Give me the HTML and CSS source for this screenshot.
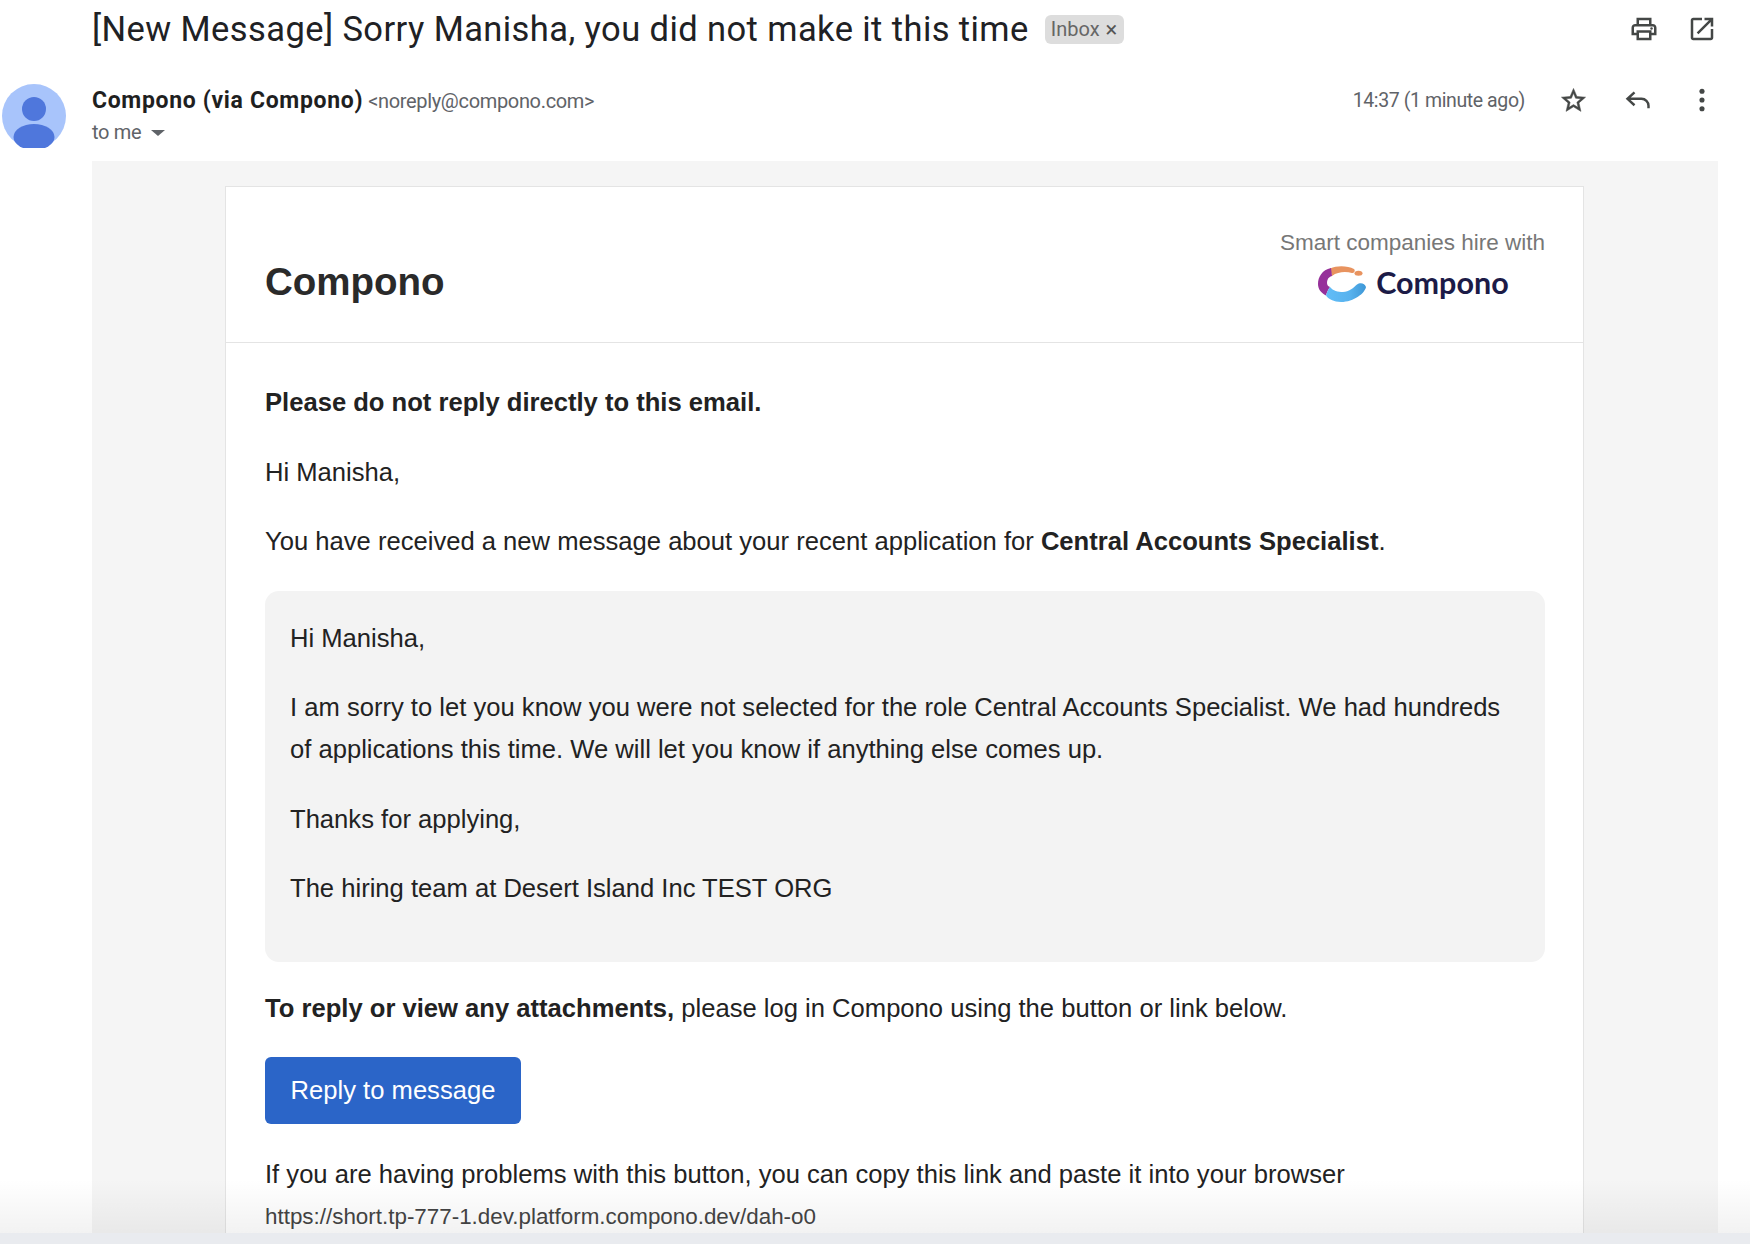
FILE: index.html
```html
<!DOCTYPE html>
<html lang="en">
<head>
<meta charset="utf-8">
<title>Sorry Manisha</title>
<link rel="stylesheet" href="styles.css">
</head>
<body>
<div class="viewport">
  <header class="subject">
    <h1 class="subject-title">[New Message] Sorry Manisha, you did not make it this time</h1>
    <span class="chip">Inbox <span class="chip-x">×</span></span>
    <div class="subject-actions">
      <svg class="icon icon-top" viewBox="0 0 24 24"><path d="M19 8h-1V3H6v5H5c-1.66 0-3 1.34-3 3v6h4v4h12v-4h4v-6c0-1.66-1.34-3-3-3zM8 5h8v3H8V5zm8 12v2H8v-4h8v2zm2-2v-2H6v2H4v-4c0-.55.45-1 1-1h14c.55 0 1 .45 1 1v4h-2z"/><circle cx="18" cy="11.5" r="1"/></svg>
      <svg class="icon icon-top" viewBox="0 0 24 24"><path d="M19 19H5V5h7V3H5c-1.11 0-2 .9-2 2v14c0 1.1.89 2 2 2h14c1.1 0 2-.9 2-2v-7h-2v7zM14 3v2h3.59l-9.83 9.83 1.41 1.41L19 6.41V10h2V3h-7z"/></svg>
    </div>
  </header>

  <section class="message">
    <div class="avatar">
      <svg viewBox="0 0 64 64"><circle cx="32" cy="32" r="32" fill="#a8c4fb"/><ellipse cx="32" cy="25" rx="12" ry="12" fill="#4f77dc"/><ellipse cx="32" cy="53" rx="20.500" ry="13" fill="#4f77dc"/></svg>
    </div>
    <div class="sender">
      <div class="sender-line"><strong class="sender-name">Compono (via Compono)</strong> <span class="sender-mail">&lt;noreply@compono.com&gt;</span></div>
      <div class="sender-to">to me <span class="caret"></span></div>
    </div>
    <div class="message-actions">
      <span class="time">14:37 (1 minute ago)</span>
      <svg class="icon star" viewBox="0 0 24 24"><path d="M22 9.24l-7.19-.62L12 2 9.19 8.63 2 9.24l5.46 4.73L5.82 21 12 17.27 18.18 21l-1.63-7.03L22 9.24zM12 15.4l-3.76 2.27 1-4.28-3.32-2.88 4.38-.38L12 6.1l1.71 4.04 4.38.38-3.32 2.88 1 4.28L12 15.4z"/></svg>
      <svg class="icon reply" viewBox="0 0 24 24"><path d="M9 5.500 3 11l6 5.500M3 11H15a6 6 0 0 1 6 6v2"/></svg>
      <svg class="icon" viewBox="0 0 24 24"><circle cx="12" cy="4.500" r="2.200"/><circle cx="12" cy="12" r="2.200"/><circle cx="12" cy="19.500" r="2.200"/></svg>
    </div>
  </section>

  <main class="panel">
    <article class="card">
      <div class="card-head">
        <div class="brand">Compono</div>
        <div class="hire">
          <div class="hire-text">Smart companies hire with</div>
          <div class="hire-logo">
            <svg class="logo-mark" viewBox="0 0 48 36">
              <defs>
                <linearGradient id="blue" x1="0" y1="0" x2="1" y2="0"><stop offset="0" stop-color="#62bdf7"/><stop offset="0.6" stop-color="#57b2ee"/><stop offset="1" stop-color="#3e97d6"/></linearGradient>
              </defs>
              <path fill="#e8935f" d="M12 2.500C20-1 30 0 36 3c1.500 1 .5 4.500-2 4-6-1.500-14-1.500-20 3z"/>
              <path fill="#96309a" d="M13 2C4 4 0 11 0 18c0 5 3 9 8 11.500 1-3.500 2-5.500 4-8.500-3-1-3.500-4-2.500-7 .5-2 2.500-3.500 4.500-4z"/>
              <ellipse cx="40.500" cy="7.300" rx="4" ry="2.500" fill="#e8935f"/>
              <path fill="url(#blue)" d="M12 21c3 4 8 5 13 5 6 0 10-4 14-7.500 3-2.500 8-1.500 9 2.500-1 6-12 15-25 15-7 0-13-3-15-6.500 1-3.500 2-5.500 4-8.500z"/>
            </svg>
            <span class="logo-word">Compono</span>
          </div>
        </div>
      </div>
      <div class="card-body">
        <p><strong>Please do not reply directly to this email.</strong></p>
        <p>Hi Manisha,</p>
        <p>You have received a new message about your recent application for <strong>Central Accounts Specialist</strong>.</p>
        <div class="quote">
          <p>Hi Manisha,</p>
          <p>I am sorry to let you know you were not selected for the role Central Accounts Specialist. We had hundreds of applications this time. We will let you know if anything else comes up.</p>
          <p>Thanks for applying,</p>
          <p>The hiring team at Desert Island Inc TEST ORG</p>
        </div>
        <p><strong>To reply or view any attachments,</strong> please log in Compono using the button or link below.</p>
        <a class="button" href="#">Reply to message</a>
        <p class="fallback">If you are having problems with this button, you can copy this link and paste it into your browser</p>
        <p class="link">https://short.tp-777-1.dev.platform.compono.dev/dah-o0</p>
      </div>
    </article>
  </main>
  <div class="fade"></div>
</div>
<div class="bottom-bar"></div>
</body>
</html>
```

FILE: styles.css
```css
* { box-sizing: border-box; }
html, body { margin: 0; height: 1244px; overflow: hidden; background: #fff; }
body { font-family: Roboto, "Liberation Sans", sans-serif; color: #202124; }

.viewport { position: relative; height: 1233px; overflow: hidden; }
.bottom-bar { height: 11px; background: #e9ebef; }
.fade { position: absolute; left: 0; right: 0; bottom: 0; height: 54px; background: linear-gradient(to bottom, rgba(0,0,0,0), rgba(0,0,0,.05)); }

.subject { display: flex; align-items: center; height: 58px; padding-left: 92px; }
.subject-title { margin: 0; font-size: 34.500px; font-weight: 400; letter-spacing: .41px; color: #202124; white-space: nowrap; }
.chip { display: inline-flex; align-items: center; gap: 6px; height: 29px; margin-left: 16px; padding: 0 7px 0 6px; border-radius: 6px; background: #dddddd; color: #666; font-size: 20px; }
.chip-x { font-size: 22px; color: #555; }
.subject-actions { display: flex; gap: 28px; margin-left: auto; padding-right: 33px; }

.icon { width: 28px; height: 28px; fill: #444746; display: block; }
.icon-top { width: 30px; height: 30px; }
.star { width: 29px; height: 29px; stroke: #444746; stroke-width: .4; }
.reply { fill: none; stroke: #444746; stroke-width: 2.100; }

.message { display: flex; height: 103px; }
.avatar { width: 64px; height: 64px; margin: 26px 26px 0 2px; }
.avatar svg { display: block; width: 64px; height: 64px; }
.sender { padding-top: 28px; }
.sender-line { height: 30px; line-height: 30px; white-space: nowrap; }
.sender-name { font-size: 23px; font-weight: 700; letter-spacing: .67px; color: #1f1f1f; }
.sender-mail { font-size: 20px; letter-spacing: -.33px; color: #5f6368; margin-left: 1px; }
.sender-to { display: flex; align-items: center; gap: 10px; height: 30px; margin-top: 1px; font-size: 20px; letter-spacing: -.33px; color: #5f6368; }
.caret { width: 0; height: 0; margin-top: 1px; border-left: 7px solid transparent; border-right: 7px solid transparent; border-top: 6px solid #5f6368; }
.message-actions { display: flex; align-items: center; align-self: flex-start; gap: 36px; height: 30px; margin: 27px 34px 0 auto; }
.time { font-size: 19.500px; letter-spacing: -.4px; color: #5f6368; margin-right: -2px; }

.panel { width: 1626px; margin-left: 92px; padding-top: 25px; height: 1072px; background: #f5f5f5; }
.card { width: 1359px; margin-left: 133px; background: #fff; border: 1px solid #e4e4e4; font-family: "Liberation Sans", Arial, sans-serif; font-size: 25.600px; line-height: 41.600px; color: #222; }
.card-head { display: flex; justify-content: space-between; align-items: center; height: 156px; padding: 0 38px 0 39px; border-bottom: 1px solid #e4e4e4; }
.brand { padding-top: 34px; font-size: 38.500px; font-weight: 700; color: #2a2a2a; }
.hire { text-align: center; }
.hire-text { font-size: 22.500px; line-height: 30px; color: #777; }
.hire-logo { display: flex; align-items: center; justify-content: center; gap: 10px; margin-top: 8px; padding-left: 2px; }
.logo-mark { width: 48px; height: 36px; }
.logo-word { margin-top: -4px; font-family: Lato, sans-serif; font-size: 30.500px; line-height: 36px; font-weight: 700; color: #1c1b47; }

.card-body { padding: 39px 38px 0 39px; }
.card-body p { margin: 0 0 28px; }
.quote { margin-bottom: 26px; padding: 27px 25px 24px; border-radius: 14px; background: #f3f3f3; }
.button { display: block; width: 256px; height: 67px; margin-bottom: 30px; border-radius: 6px; background: #2b65c8; color: #fff; text-align: center; line-height: 67px; text-decoration: none; }
.card-body .fallback { margin-bottom: 0; }
.card-body .link { font-size: 22.400px; color: #444; }
```
